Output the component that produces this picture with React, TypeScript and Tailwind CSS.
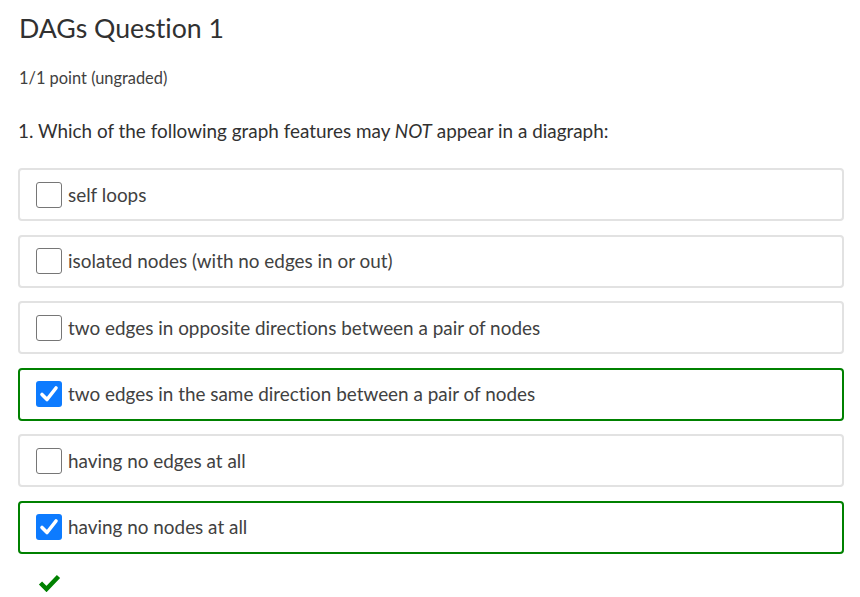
import React from "react";

const options = [
  { label: "self loops", checked: false },
  { label: "isolated nodes (with no edges in or out)", checked: false },
  { label: "two edges in opposite directions between a pair of nodes", checked: false },
  { label: "two edges in the same direction between a pair of nodes", checked: true },
  { label: "having no edges at all", checked: false },
  { label: "having no nodes at all", checked: true },
];

function Box({ checked }: { checked: boolean }) {
  if (checked) {
    return (
      <span className="flex h-[26px] w-[26px] shrink-0 items-center justify-center rounded-[3px] bg-[#0d7bff]">
        <svg width="22" height="22" viewBox="0 0 22 22">
          <path d="M4 11.5 L9 16.5 L18 5" fill="none" stroke="white" strokeWidth="3.6" strokeLinecap="round" strokeLinejoin="round" />
        </svg>
      </span>
    );
  }
  return <span className="h-[26px] w-[26px] shrink-0 rounded-[3px] border-[1.5px] border-[#767676] bg-white" />;
}

export default function App() {
  return (
    <div
      className="min-h-[597px] w-[860px] bg-white text-[#414141] [font-variant-ligatures:none]"
      style={{ fontFamily: "Lato, 'Noto Sans', sans-serif" }}
    >
      <div className="px-[18px] pt-[10px]">
        <h2 className="pl-[1px] text-[26.7px] leading-[36px] text-[#313131]">DAGs Question 1</h2>
        <div className="mt-[22px] pl-[1px] text-[16.4px] leading-[20px] text-[#414141]">1/1 point (ungraded)</div>
        <p className="mt-[31px] text-[18.9px] leading-[24px] text-[#313131]">
          1. Which of the following graph features may <em>NOT</em> appear in a diagraph:
        </p>
        <div className="mt-[25px] flex w-[826px] flex-col gap-[13.5px]">
          {options.map((o) => (
            <div
              key={o.label}
              className={
                "flex h-[53px] items-center gap-[6px] rounded-[4px] border-2 pl-[16px] " +
                (o.checked ? "border-[#008100]" : "border-[#e2e2e2]")
              }
            >
              <Box checked={o.checked} />
              <span className="text-[18.9px] leading-[24px] text-[#414141]">{o.label}</span>
            </div>
          ))}
        </div>
        <div className="mt-[20px] pl-[20px]">
          <svg width="23" height="18" viewBox="0 0 23 18">
            <path d="M2.5 9 L8.5 15 L20.5 2.5" fill="none" stroke="#008100" strokeWidth="4.5" strokeLinejoin="miter" />
          </svg>
        </div>
      </div>
    </div>
  );
}
